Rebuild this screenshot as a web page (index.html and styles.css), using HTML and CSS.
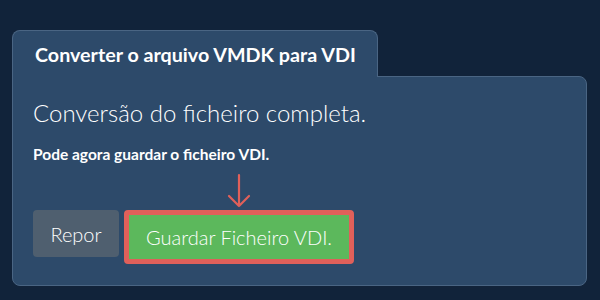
FILE: index.html
```html
<!DOCTYPE html>
<html lang="pt">
<head>
  <meta charset="UTF-8" />
  <title>Converter VMDK para VDI</title>
  <link rel="stylesheet" href="styles.css">
</head>
<body>
  <div class="converter">
    <div class="tab">Converter o arquivo VMDK para VDI</div>
    <div class="panel">
      <h1>Conversão do ficheiro completa.</h1>
      <p class="hint">Pode agora guardar o ficheiro VDI.</p>
      <div class="actions">
        <button class="btn btn-reset">Repor</button>
        <div class="save-wrap">
          <svg class="arrow" width="26" height="36" viewBox="0 0 26 36">
            <path d="M13 3 L13 34 M3 24 L13 34 L23 24" fill="none" stroke="#e0605a" stroke-width="2.2" stroke-linecap="round" stroke-linejoin="round"/>
          </svg>
          <button class="btn btn-save">Guardar Ficheiro VDI.</button>
        </div>
      </div>
    </div>
  </div>
</body>
</html>
```

FILE: styles.css
```css
* { box-sizing: border-box; }

body {
  margin: 0;
  background: #11233a;
  font-family: Lato, 'Open Sans', sans-serif;
  color: #fff;
}

.converter {
  padding: 30px 13px 14px 12px;
}

.tab {
  width: 366px;
  height: 47px;
  padding: 12px 0 0 22px;
  background: #2d4a6a;
  border: 1px solid #4a6583;
  border-bottom: none;
  border-radius: 8px 8px 0 0;
  font-size: 19.7px;
  font-weight: 700;
  line-height: 24px;
  position: relative;
  z-index: 1;
}

.panel {
  margin-top: -1px;
  height: 210px;
  padding: 21px 20px 0 20px;
  background: #2d4a6a;
  border: 1px solid #4a6583;
  border-radius: 0 8px 8px 8px;
}

.panel h1 {
  margin: 0;
  font-size: 24px;
  font-weight: 300;
  line-height: 30px;
}

.hint {
  margin: 17px 0 0;
  font-size: 15.5px;
  font-weight: 700;
  line-height: 19px;
}

.actions {
  display: flex;
  align-items: flex-start;
  gap: 5px;
  margin-top: 8px;
}

.btn {
  font-family: inherit;
  font-weight: 300;
  color: #fff;
  border: none;
  border-radius: 4px;
  cursor: pointer;
}

.btn-reset {
  margin-top: 38px;
  width: 86px;
  height: 47px;
  background: #4f5f6f;
  font-size: 20px;
}

.save-wrap {
  display: flex;
  flex-direction: column;
  align-items: center;
}

.arrow {
  display: block;
  margin-bottom: 2px;
}

.btn-save {
  width: 230px;
  height: 54px;
  background: #5cb85c;
  border: 5px solid #e0605a;
  font-size: 20px;
}
```
